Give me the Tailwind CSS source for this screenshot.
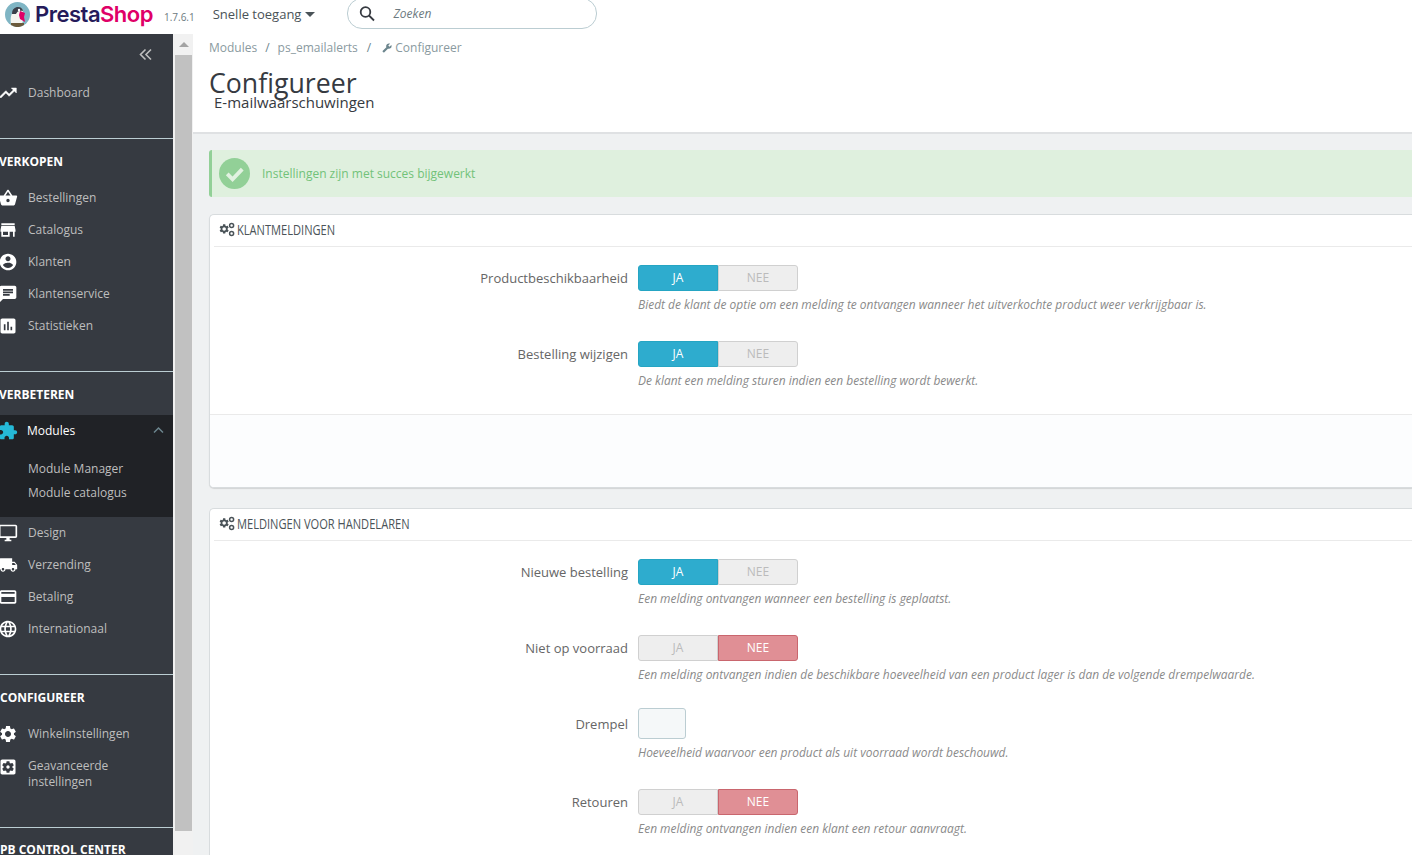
<!DOCTYPE html>
<html lang="nl">
<head>
<meta charset="utf-8">
<title>PrestaShop</title>
<script src="https://cdn.jsdelivr.net/npm/@tailwindcss/browser@4"></script>
</head>
<body class="m-0 h-[855px] w-[1412px] overflow-hidden bg-[#eff1f2] font-['Open_Sans',sans-serif] text-[13px] text-[#6c868e]">
<header class="flex h-[34px] items-start bg-white">
  <svg class="ml-[5px] mt-[2px] h-[25px] w-[25px] shrink-0" viewBox="0 0 25 25"><circle cx="12.5" cy="12.5" r="12.5" fill="#7fb5c4"/><path d="M6 22c-1-6 0-13 6-16 3-1 6 0 6 3l-1 4 1 6-2 5H8z" fill="#f4f4f0"/><path d="M7 12c0-5 3-7 6-7s5 2 5 4c-3-1-6 0-7 3z" fill="#3a3f4a"/><path d="M15 9l5 2-1 4 1 5-5-3-1-4z" fill="#df0067"/><circle cx="14" cy="8" r="1.2" fill="#fff"/><path d="M6 21h13v2a12 12 0 0 1-13 0z" fill="#6b5a3c"/></svg>
  <div class="ml-[5px] mt-[-1px] font-['Inter',sans-serif] text-[22px] leading-[30px] font-semibold tracking-[-0.5px] text-[#251b5b]">Presta<span class="text-[#df0067]">Shop</span></div>
  <span class="ml-[11px] mt-[10px] text-[10px] leading-[14px] text-[#6c7a80]">1.7.6.1</span>
  <button class="ml-[18px] mt-[5px] flex items-center text-[13px] leading-[18px] text-[#4a5358]">Snelle toegang<span class="ml-[4px] mt-[1px] h-0 w-0 border-x-[5px] border-t-[5px] border-x-transparent border-t-[#4a5358]"></span></button>
  <div class="ml-[32px] mt-[-2px] flex h-[31px] w-[250px] items-center rounded-[15px] border border-[#bbcdd2] bg-white pl-[10px]">
    <svg class="h-[18px] w-[18px]" viewBox="0 0 18 18" fill="none" stroke="#363a41" stroke-width="1.8"><circle cx="7.5" cy="7" r="4.8"/><path d="M11 10.5l5 5"/></svg>
    <span class="ml-[17px] text-[12px] italic text-[#6c7a80]">Zoeken</span>
  </div>
</header>
<div class="flex h-[821px]">
  <nav class="h-full w-[173px] shrink-0 overflow-hidden bg-[#363a41] text-[12px] text-[#bebebe]">
    <div class="flex h-[42px] items-start justify-end pr-[21px] pt-[14px]">
      <svg class="h-[13px] w-[13px]" viewBox="0 0 13 13" fill="none" stroke="#bebebe" stroke-width="1.6"><path d="M6.5 1.5L1.5 6.5l5 5M12 1.5L7 6.5l5 5"/></svg>
    </div>
    <div class="border-b border-[#bbcdd2] pb-[30px]">
      <a class="flex h-[32px] items-center pt-[2px]"><svg class="-ml-[2px] h-[20px] w-[20px] shrink-0 fill-white stroke-white stroke-[0.6]" viewBox="0 0 24 24"><path d="M16 6l2.29 2.29-4.88 4.88-4-4L2 16.59 3.41 18l6-6 4 4 6.3-6.29L22 12V6z"/></svg><span class="ml-[10px]">Dashboard</span></a>
    </div>
    <div class="border-b border-[#bbcdd2] pb-[30px]">
      <div class="-ml-[1px] flex h-[42px] items-center pt-[4px] text-[12px] font-bold text-white">VERKOPEN</div>
      <a class="flex h-[32px] items-center pt-[2px]"><svg class="-ml-[2px] h-[20px] w-[20px] shrink-0 fill-white" viewBox="0 0 24 24"><path d="M17.21 9l-4.38-6.56c-.19-.28-.51-.42-.83-.42-.32 0-.64.14-.83.43L6.79 9H2c-.55 0-1 .45-1 1 0 .09.01.18.04.27l2.54 9.27c.23.84 1 1.46 1.92 1.46h13c.92 0 1.69-.62 1.93-1.46l2.54-9.27L23 10c0-.55-.45-1-1-1h-4.79zM9 9l3-4.4L15 9H9zm3 8c-1.1 0-2-.9-2-2s.9-2 2-2 2 .9 2 2-.9 2-2 2z"/></svg><span class="ml-[10px]">Bestellingen</span></a>
      <a class="flex h-[32px] items-center pt-[2px]"><svg class="-ml-[2px] h-[20px] w-[20px] shrink-0 fill-white" viewBox="0 0 24 24"><path d="M20 4H4v2h16V4zm1 10v-2l-1-5H4l-1 5v2h1v6h10v-6h4v6h2v-6h1zm-9 4H6v-4h6v4z"/></svg><span class="ml-[10px]">Catalogus</span></a>
      <a class="flex h-[32px] items-center pt-[2px]"><svg class="-ml-[2px] h-[20px] w-[20px] shrink-0 fill-white" viewBox="0 0 24 24"><path d="M12 2C6.48 2 2 6.48 2 12s4.48 10 10 10 10-4.48 10-10S17.52 2 12 2zm0 3c1.66 0 3 1.34 3 3s-1.34 3-3 3-3-1.34-3-3 1.34-3 3-3zm0 14.2c-2.5 0-4.71-1.28-6-3.22.03-1.99 4-3.08 6-3.08 1.99 0 5.97 1.09 6 3.08-1.29 1.94-3.5 3.22-6 3.22z"/></svg><span class="ml-[10px]">Klanten</span></a>
      <a class="flex h-[32px] items-center pt-[2px]"><svg class="-ml-[2px] h-[20px] w-[20px] shrink-0 fill-white" viewBox="0 0 24 24"><path d="M20 2H4c-1.1 0-1.99.9-1.99 2L2 22l4-4h14c1.1 0 2-.9 2-2V4c0-1.1-.9-2-2-2zM6 9h12v2H6V9zm8 5H6v-2h8v2zm4-6H6V6h12v2z"/></svg><span class="ml-[10px]">Klantenservice</span></a>
      <a class="flex h-[32px] items-center pt-[2px]"><svg class="-ml-[2px] h-[20px] w-[20px] shrink-0 fill-white" viewBox="0 0 24 24"><path d="M19 3H5c-1.1 0-2 .9-2 2v14c0 1.1.9 2 2 2h14c1.1 0 2-.9 2-2V5c0-1.1-.9-2-2-2zM9 17H7v-7h2v7zm4 0h-2V7h2v10zm4 0h-2v-4h2v4z"/></svg><span class="ml-[10px]">Statistieken</span></a>
    </div>
    <div class="border-b border-[#bbcdd2] pb-[29px]">
      <div class="-ml-[1px] flex h-[43px] items-center pt-[2px] text-[12px] font-bold text-white">VERBETEREN</div>
      <div class="h-[102px] bg-[#202226]">
        <a class="flex h-[31px] items-center text-white"><svg class="-ml-[2px] h-[20px] w-[20px] shrink-0 fill-[#25b9d7]" viewBox="0 0 24 24"><path d="M20.5 11H19V7c0-1.1-.9-2-2-2h-4V3.5C13 2.12 11.88 1 10.5 1S8 2.12 8 3.5V5H4c-1.1 0-1.99.9-1.99 2v3.8H3.5c1.49 0 2.7 1.21 2.7 2.7s-1.21 2.7-2.7 2.7H2V20c0 1.1.9 2 2 2h3.8v-1.5c0-1.49 1.21-2.7 2.7-2.7 1.49 0 2.7 1.21 2.7 2.7V22H17c1.1 0 2-.9 2-2v-4h1.5c1.38 0 2.5-1.12 2.5-2.5S21.88 11 20.5 11z"/></svg><span class="ml-[9px] flex-1">Modules</span><svg class="mr-[9px] h-[9px] w-[11px]" viewBox="0 0 11 9" fill="none" stroke="#6c868e" stroke-width="1.5"><path d="M1 6.5l4.5-4.5 4.5 4.5"/></svg></a>
        <div class="pl-[28px] pt-[11px]">
          <div class="flex h-[24px] items-center">Module Manager</div>
          <div class="flex h-[24px] items-center">Module catalogus</div>
        </div>
      </div>
      <a class="flex h-[32px] items-center"><svg class="-ml-[2px] h-[20px] w-[20px] shrink-0 fill-white" viewBox="0 0 24 24"><path d="M21 2H3c-1.1 0-2 .9-2 2v12c0 1.1.9 2 2 2h7v2H8v2h8v-2h-2v-2h7c1.1 0 2-.9 2-2V4c0-1.1-.9-2-2-2zm0 14H3V4h18v12z"/></svg><span class="ml-[10px]">Design</span></a>
      <a class="flex h-[32px] items-center"><svg class="-ml-[2px] h-[20px] w-[20px] shrink-0 fill-white" viewBox="0 0 24 24"><path d="M20 8h-3V4H3c-1.1 0-2 .9-2 2v11h2c0 1.66 1.34 3 3 3s3-1.34 3-3h6c0 1.66 1.34 3 3 3s3-1.34 3-3h2v-5l-3-4zM6 18.5c-.83 0-1.5-.67-1.5-1.5s.67-1.5 1.5-1.5 1.5.67 1.5 1.5-.67 1.5-1.5 1.5zm13.5-9l1.96 2.5H17V9.5h2.5zm-1.5 9c-.83 0-1.5-.67-1.5-1.5s.67-1.5 1.5-1.5 1.5.67 1.5 1.5-.67 1.5-1.5 1.5z"/></svg><span class="ml-[10px]">Verzending</span></a>
      <a class="flex h-[32px] items-center"><svg class="-ml-[2px] h-[20px] w-[20px] shrink-0 fill-white" viewBox="0 0 24 24"><path d="M20 4H4c-1.11 0-1.99.89-1.99 2L2 18c0 1.11.89 2 2 2h16c1.11 0 2-.89 2-2V6c0-1.11-.89-2-2-2zm0 14H4v-6h16v6zm0-10H4V6h16v2z"/></svg><span class="ml-[10px]">Betaling</span></a>
      <a class="flex h-[32px] items-center"><svg class="-ml-[2px] h-[20px] w-[20px] shrink-0 fill-white" viewBox="0 0 24 24"><path d="M11.99 2C6.47 2 2 6.48 2 12s4.47 10 9.99 10C17.52 22 22 17.52 22 12S17.52 2 11.99 2zm6.93 6h-2.95c-.32-1.25-.78-2.45-1.38-3.56 1.84.63 3.37 1.91 4.33 3.56zM12 4.04c.83 1.2 1.48 2.53 1.91 3.96h-3.82c.43-1.43 1.08-2.76 1.91-3.96zM4.26 14C4.1 13.36 4 12.69 4 12s.1-1.36.26-2h3.38c-.08.66-.14 1.32-.14 2 0 .68.06 1.34.14 2H4.26zm.82 2h2.95c.32 1.25.78 2.45 1.38 3.56-1.84-.63-3.37-1.9-4.33-3.56zm2.95-8H5.08c.96-1.66 2.49-2.93 4.33-3.56C8.81 5.55 8.35 6.75 8.03 8zM12 19.96c-.83-1.2-1.48-2.53-1.91-3.96h3.82c-.43 1.43-1.08 2.76-1.91 3.96zM14.34 14H9.66c-.09-.66-.16-1.32-.16-2 0-.68.07-1.35.16-2h4.68c.09.65.16 1.32.16 2 0 .68-.07 1.34-.16 2zm.25 5.56c.6-1.11 1.06-2.31 1.38-3.56h2.95c-.96 1.65-2.49 2.93-4.33 3.56zM16.36 14c.08-.66.14-1.32.14-2 0-.68-.06-1.34-.14-2h3.38c.16.64.26 1.31.26 2s-.1 1.36-.26 2h-3.38z"/></svg><span class="ml-[10px]">Internationaal</span></a>
    </div>
    <div class="border-b border-[#bbcdd2] pb-[30px]">
      <div class="flex h-[42px] items-center pt-[4px] text-[12px] font-bold text-white">CONFIGUREER</div>
      <a class="flex h-[32px] items-center pt-[2px]"><svg class="-ml-[2px] h-[20px] w-[20px] shrink-0 fill-white" viewBox="0 0 24 24"><path d="M19.14 12.94c.04-.3.06-.61.06-.94 0-.32-.02-.64-.07-.94l2.03-1.58c.18-.14.23-.41.12-.61l-1.92-3.32c-.12-.22-.37-.29-.59-.22l-2.39.96c-.5-.38-1.03-.7-1.62-.94l-.36-2.54c-.04-.24-.24-.41-.48-.41h-3.84c-.24 0-.43.17-.47.41l-.36 2.54c-.59.24-1.13.57-1.62.94l-2.39-.96c-.22-.08-.47 0-.59.22L2.74 8.87c-.12.21-.08.47.12.61l2.03 1.58c-.05.3-.09.63-.09.94s.02.64.07.94l-2.03 1.58c-.18.14-.23.41-.12.61l1.92 3.32c.12.22.37.29.59.22l2.39-.96c.5.38 1.03.7 1.62.94l.36 2.54c.05.24.24.41.48.41h3.84c.24 0 .44-.17.47-.41l.36-2.54c.59-.24 1.13-.56 1.62-.94l2.39.96c.22.08.47 0 .59-.22l1.92-3.32c.12-.22.07-.47-.12-.61l-2.01-1.58zM12 15.6c-1.98 0-3.6-1.62-3.6-3.6s1.62-3.6 3.6-3.6 3.6 1.62 3.6 3.6-1.62 3.6-3.6 3.6z"/></svg><span class="ml-[10px]">Winkelinstellingen</span></a>
      <a class="flex h-[48px] items-start pt-[8px] leading-[16px]"><svg class="-ml-[2px] h-[20px] w-[20px] shrink-0 fill-white" viewBox="0 0 24 24"><path d="M12 10c-1.1 0-2 .9-2 2s.9 2 2 2 2-.9 2-2-.9-2-2-2zm7-7H5c-1.11 0-2 .9-2 2v14c0 1.1.89 2 2 2h14c1.11 0 2-.9 2-2V5c0-1.1-.89-2-2-2zm-1.75 9c0 .23-.02.46-.05.68l1.48 1.16c.13.11.17.3.08.45l-1.4 2.42c-.09.15-.27.21-.43.15l-1.74-.7c-.36.28-.76.51-1.18.69l-.26 1.85c-.03.17-.18.3-.35.3h-2.8c-.17 0-.32-.13-.35-.29l-.26-1.85c-.43-.18-.82-.41-1.18-.69l-1.74.7c-.16.06-.34 0-.43-.15l-1.4-2.42c-.09-.15-.05-.34.08-.45l1.48-1.16c-.03-.23-.05-.46-.05-.69 0-.23.02-.46.05-.68l-1.48-1.16c-.13-.11-.17-.3-.08-.45l1.4-2.42c.09-.15.27-.21.43-.15l1.74.7c.36-.28.76-.51 1.18-.69l.26-1.85c.03-.17.18-.3.35-.3h2.8c.17 0 .32.13.35.29l.26 1.85c.43.18.82.41 1.18.69l1.74-.7c.16-.06.34 0 .43.15l1.4 2.42c.09.15.05.34-.08.45l-1.48 1.16c.03.23.05.46.05.69z"/></svg><span class="ml-[10px] mt-[1px]">Geavanceerde<br>instellingen</span></a>
    </div>
    <div class="flex h-[42px] items-center whitespace-nowrap pt-[2px] text-[12px] font-bold text-white">PB CONTROL CENTER</div>
  </nav>
  <div class="flex h-full w-[20px] shrink-0 flex-col bg-[#f1f1f1] pl-[2px]">
    <div class="flex h-[21px] w-[17px] items-center justify-center"><span class="h-0 w-0 border-x-[5px] border-b-[5px] border-x-transparent border-b-[#a3a3a3]"></span></div>
    <div class="h-[776px] w-[17px] bg-[#c1c1c1]"></div>
  </div>
  <main class="min-w-0 flex-1">
    <div class="h-[100px] border-b-2 border-[#dfe1e3] bg-white pl-[16px]">
      <div class="flex h-[27px] items-center pt-[1px] text-[12px] text-[#8a9aa0]">
        <span>Modules</span><span class="mx-[8px] text-[#6c868e]">/</span><span>ps_emailalerts</span><span class="ml-[9px] mr-[11px] text-[#6c868e]">/</span>
        <svg class="mr-[3px] h-[10px] w-[10px] -scale-x-100 fill-[#6c868e]" viewBox="0 0 24 24"><path d="M22.7 19l-9.1-9.1c.9-2.3.4-5-1.5-6.9-2-2-5-2.4-7.4-1.3L9 6 6 9 1.6 4.7C.4 7.1.9 10.1 2.9 12.1c1.9 1.9 4.6 2.4 6.9 1.5l9.1 9.1c.4.4 1 .4 1.4 0l2.3-2.3c.5-.4.5-1.1.1-1.4z"/></svg><span>Configureer</span>
      </div>
      <h1 class="mt-[6px] text-[26.7px] leading-[32px] font-normal text-[#363a41]">Configureer</h1>
      <h2 class="-mt-[7px] pl-[5px] text-[15px] leading-[20px] font-normal text-[#363a41]">E-mailwaarschuwingen</h2>
    </div>
    <div class="pl-[16px] pt-[16px]">
      <div class="flex h-[47px] items-center rounded-l-[3px] border-l-[3px] border-[#92d097] bg-[#dff0de] pl-[7px]">
        <svg class="h-[31px] w-[31px] shrink-0" viewBox="0 0 32 32"><circle cx="16" cy="16" r="16" fill="#92d097"/><path d="M8.5 16.5l5.5 5.5 10-10.5" fill="none" stroke="#e2f2e1" stroke-width="4"/></svg>
        <span class="ml-[12px] text-[12px] text-[#72c279]">Instellingen zijn met succes bijgewerkt</span>
      </div>
      <section class="mt-[17px] h-[274px] overflow-hidden rounded-l-[5px] border border-r-0 border-[#d8dcde] bg-white shadow-[0_1px_1px_rgba(0,0,0,0.12)]">
        <div class="ml-[4px] flex h-[32px] items-center border-b border-[#eaeaea] pb-[2px] pl-[5px]">
          <svg class="h-[15px] w-[16px] shrink-0 fill-[#4a5358]" viewBox="0 0 16 15"><g transform="translate(-0.6 1.2) scale(0.48)"><path d="M19.14 12.94c.04-.3.06-.61.06-.94 0-.32-.02-.64-.07-.94l2.03-1.58c.18-.14.23-.41.12-.61l-1.92-3.32c-.12-.22-.37-.29-.59-.22l-2.39.96c-.5-.38-1.03-.7-1.62-.94l-.36-2.54c-.04-.24-.24-.41-.48-.41h-3.84c-.24 0-.43.17-.47.41l-.36 2.54c-.59.24-1.13.57-1.62.94l-2.39-.96c-.22-.08-.47 0-.59.22L2.74 8.87c-.12.21-.08.47.12.61l2.03 1.58c-.05.3-.09.63-.09.94s.02.64.07.94l-2.03 1.58c-.18.14-.23.41-.12.61l1.92 3.32c.12.22.37.29.59.22l2.39-.96c.5.38 1.03.7 1.62.94l.36 2.54c.05.24.24.41.48.41h3.84c.24 0 .44-.17.47-.41l.36-2.54c.59-.24 1.13-.56 1.62-.94l2.39.96c.22.08.47 0 .59-.22l1.92-3.32c.12-.22.07-.47-.12-.61l-2.01-1.58zM12 15.6c-1.98 0-3.6-1.62-3.6-3.6s1.62-3.6 3.6-3.6 3.6 1.62 3.6 3.6-1.62 3.6-3.6 3.6z"/></g><circle cx="12.6" cy="3.4" r="2" fill="none" stroke="#4a5358" stroke-width="1.5"/><circle cx="12.6" cy="11.6" r="2" fill="none" stroke="#4a5358" stroke-width="1.5"/></svg>
          <h3 class="ml-[2px] origin-left scale-x-[0.74] whitespace-nowrap text-[15px] font-normal text-[#4a5358]">KLANTMELDINGEN</h3>
        </div>
        <div class="h-[168px] border-b border-[#eaeaea] pt-[18px]">
          <div class="flex h-[76px]">
            <label class="w-[428px] pr-[10px] pt-[3px] text-right text-[13px] leading-[20px] text-[#666]">Productbeschikbaarheid</label>
            <div>
              <div class="flex h-[26px] w-[160px] text-center text-[12px] leading-[24px]"><span class="w-[80px] rounded-l-[3px] border border-[#25a5c3] bg-[#2eacce] text-white">JA</span><span class="w-[80px] rounded-r-[3px] border border-[#d0d0d0] bg-[#eee] text-[#bbb]">NEE</span></div>
              <p class="mt-[5px] whitespace-nowrap text-[11.96px] leading-[18px] italic text-[#8a8a8a]">Biedt de klant de optie om een melding te ontvangen wanneer het uitverkochte product weer verkrijgbaar is.</p>
            </div>
          </div>
          <div class="flex h-[76px]">
            <label class="w-[428px] pr-[10px] pt-[3px] text-right text-[13px] leading-[20px] text-[#666]">Bestelling wijzigen</label>
            <div>
              <div class="flex h-[26px] w-[160px] text-center text-[12px] leading-[24px]"><span class="w-[80px] rounded-l-[3px] border border-[#25a5c3] bg-[#2eacce] text-white">JA</span><span class="w-[80px] rounded-r-[3px] border border-[#d0d0d0] bg-[#eee] text-[#bbb]">NEE</span></div>
              <p class="mt-[5px] whitespace-nowrap text-[11.96px] leading-[18px] italic text-[#8a8a8a]">De klant een melding sturen indien een bestelling wordt bewerkt.</p>
            </div>
          </div>
        </div>
        <div class="h-[72px] bg-[#fcfdfe]"></div>
      </section>
      <section class="mt-[20px] rounded-l-[5px] border border-r-0 border-[#d8dcde] bg-white pb-[40px]">
        <div class="ml-[4px] flex h-[32px] items-center border-b border-[#eaeaea] pb-[2px] pl-[5px]">
          <svg class="h-[15px] w-[16px] shrink-0 fill-[#4a5358]" viewBox="0 0 16 15"><g transform="translate(-0.6 1.2) scale(0.48)"><path d="M19.14 12.94c.04-.3.06-.61.06-.94 0-.32-.02-.64-.07-.94l2.03-1.58c.18-.14.23-.41.12-.61l-1.92-3.32c-.12-.22-.37-.29-.59-.22l-2.39.96c-.5-.38-1.03-.7-1.62-.94l-.36-2.54c-.04-.24-.24-.41-.48-.41h-3.84c-.24 0-.43.17-.47.41l-.36 2.54c-.59.24-1.13.57-1.62.94l-2.39-.96c-.22-.08-.47 0-.59.22L2.74 8.87c-.12.21-.08.47.12.61l2.03 1.58c-.05.3-.09.63-.09.94s.02.64.07.94l-2.03 1.58c-.18.14-.23.41-.12.61l1.92 3.32c.12.22.37.29.59.22l2.39-.96c.5.38 1.03.7 1.62.94l.36 2.54c.05.24.24.41.48.41h3.84c.24 0 .44-.17.47-.41l.36-2.54c.59-.24 1.13-.56 1.62-.94l2.39.96c.22.08.47 0 .59-.22l1.92-3.32c.12-.22.07-.47-.12-.61l-2.01-1.58zM12 15.6c-1.98 0-3.6-1.62-3.6-3.6s1.62-3.6 3.6-3.6 3.6 1.62 3.6 3.6-1.62 3.6-3.6 3.6z"/></g><circle cx="12.6" cy="3.4" r="2" fill="none" stroke="#4a5358" stroke-width="1.5"/><circle cx="12.6" cy="11.6" r="2" fill="none" stroke="#4a5358" stroke-width="1.5"/></svg>
          <h3 class="ml-[2px] origin-left scale-x-[0.74] whitespace-nowrap text-[15px] font-normal text-[#4a5358]">MELDINGEN VOOR HANDELAREN</h3>
        </div>
        <div class="pt-[18px]">
          <div class="flex h-[76px]">
            <label class="w-[428px] pr-[10px] pt-[3px] text-right text-[13px] leading-[20px] text-[#666]">Nieuwe bestelling</label>
            <div>
              <div class="flex h-[26px] w-[160px] text-center text-[12px] leading-[24px]"><span class="w-[80px] rounded-l-[3px] border border-[#25a5c3] bg-[#2eacce] text-white">JA</span><span class="w-[80px] rounded-r-[3px] border border-[#d0d0d0] bg-[#eee] text-[#bbb]">NEE</span></div>
              <p class="mt-[5px] whitespace-nowrap text-[11.96px] leading-[18px] italic text-[#8a8a8a]">Een melding ontvangen wanneer een bestelling is geplaatst.</p>
            </div>
          </div>
          <div class="flex h-[73px]">
            <label class="w-[428px] pr-[10px] pt-[3px] text-right text-[13px] leading-[20px] text-[#666]">Niet op voorraad</label>
            <div>
              <div class="flex h-[26px] w-[160px] text-center text-[12px] leading-[24px]"><span class="w-[80px] rounded-l-[3px] border border-[#d0d0d0] bg-[#eee] text-[#bbb]">JA</span><span class="w-[80px] rounded-r-[3px] border border-[#c9666e] bg-[#e08f95] text-white">NEE</span></div>
              <p class="mt-[5px] whitespace-nowrap text-[11.96px] leading-[18px] italic text-[#8a8a8a]">Een melding ontvangen indien de beschikbare hoeveelheid van een product lager is dan de volgende drempelwaarde.</p>
            </div>
          </div>
          <div class="flex h-[81px]">
            <label class="w-[428px] pr-[10px] pt-[6px] text-right text-[13px] leading-[20px] text-[#666]">Drempel</label>
            <div>
              <div class="h-[31px] w-[48px] rounded-[3px] border border-[#bbcdd2] bg-[#f5f8f9]"></div>
              <p class="mt-[5px] whitespace-nowrap text-[11.96px] leading-[18px] italic text-[#8a8a8a]">Hoeveelheid waarvoor een product als uit voorraad wordt beschouwd.</p>
            </div>
          </div>
          <div class="flex h-[66px]">
            <label class="w-[428px] pr-[10px] pt-[3px] text-right text-[13px] leading-[20px] text-[#666]">Retouren</label>
            <div>
              <div class="flex h-[26px] w-[160px] text-center text-[12px] leading-[24px]"><span class="w-[80px] rounded-l-[3px] border border-[#d0d0d0] bg-[#eee] text-[#bbb]">JA</span><span class="w-[80px] rounded-r-[3px] border border-[#c9666e] bg-[#e08f95] text-white">NEE</span></div>
              <p class="mt-[5px] whitespace-nowrap text-[11.96px] leading-[18px] italic text-[#8a8a8a]">Een melding ontvangen indien een klant een retour aanvraagt.</p>
            </div>
          </div>
        </div>
      </section>
    </div>
  </main>
</div>
</body>
</html>
